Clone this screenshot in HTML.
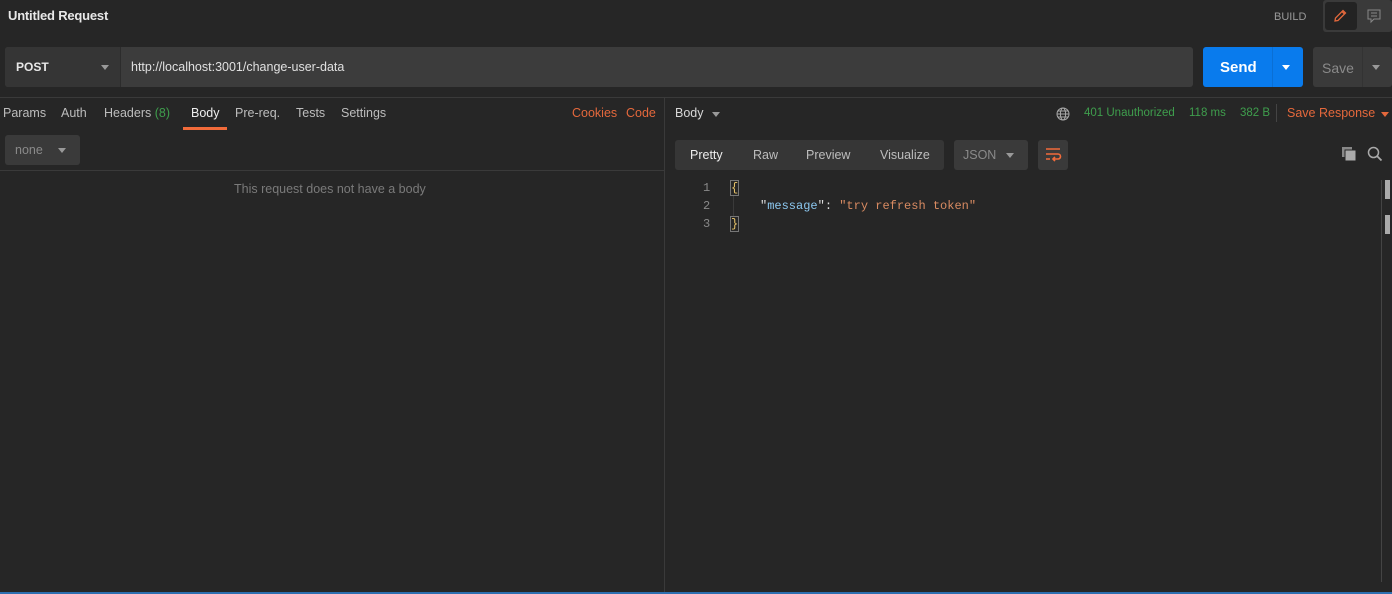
<!DOCTYPE html>
<html><head><style>
*{margin:0;padding:0;box-sizing:border-box}
body{width:1392px;height:594px;background:#262626;font-family:"Liberation Sans",sans-serif;font-size:12.5px;color:#d0d0d0;position:relative;overflow:hidden}
.a{position:absolute;white-space:nowrap}
.mono{font-family:"Liberation Mono",monospace;font-size:12px}
</style></head><body>
<div class="a" style="left:8px;top:8px;font-size:13px;color:#e8e8e8;font-weight:bold;letter-spacing:-0.2px">Untitled Request</div>
<div class="a" style="left:1274px;top:11px;font-size:11px;color:#9a9a9a">BUILD</div>
<div class="a" style="left:1323px;top:0;width:69px;height:32px;background:#3a3a3a;border-radius:3px"></div>
<div class="a" style="left:1325px;top:2px;width:32px;height:28px;background:#232323;border-radius:3px"></div>
<svg class="a" style="left:1332px;top:8px" width="16" height="16" viewBox="0 0 16 16"><path d="M3 13 L3.5 10 L11 2.5 L13.5 5 L6 12.5 Z M10 3.5 L12.5 6" fill="none" stroke="#e4683c" stroke-width="1.3"/></svg>
<svg class="a" style="left:1366px;top:8px" width="16" height="16" viewBox="0 0 16 16"><path d="M2 2 H14 V11 H8 L5 14 V11 H2 Z M5 5 H11 M5 8 H11" fill="none" stroke="#888" stroke-width="1"/></svg>

<div class="a" style="left:5px;top:47px;width:1188px;height:40px;background:#3c3c3c;border-radius:3px"></div>
<div class="a" style="left:5px;top:47px;width:116px;height:40px;background:#353535;border-radius:3px 0 0 3px;border-right:1px solid #2c2c2c"></div>
<div class="a" style="left:16px;top:60px;font-weight:bold;font-size:12px;color:#e8e8e8">POST</div>
<div class="a" style="left:101px;top:65px;border:4px solid transparent;border-top:5px solid #999"></div>
<div class="a" style="left:131px;top:60px;color:#e0e0e0">http://localhost:3001/change-user-data</div>

<div class="a" style="left:1203px;top:47px;width:100px;height:40px;background:#097bed;border-radius:3px"></div>
<div class="a" style="left:1272px;top:47px;width:1px;height:40px;background:#0a6fd4"></div>
<div class="a" style="left:1220px;top:59px;font-size:15px;font-weight:bold;color:#fff">Send</div>
<div class="a" style="left:1282px;top:65px;border:4px solid transparent;border-top:5px solid #fff"></div>
<div class="a" style="left:1313px;top:47px;width:79px;height:40px;background:#3a3a3a;border-radius:3px"></div>
<div class="a" style="left:1362px;top:47px;width:1px;height:40px;background:#333"></div>
<div class="a" style="left:1322px;top:60px;font-size:14px;color:#8a8a8a">Save</div>
<div class="a" style="left:1372px;top:65px;border:4px solid transparent;border-top:5px solid #999"></div>

<div class="a" style="left:0;top:97px;width:1392px;height:1px;background:#3a3a3a"></div>
<div class="a" style="left:664px;top:97px;width:1px;height:495px;background:#3a3a3a"></div>

<div class="a" style="left:3px;top:106px;color:#bdbdbd">Params</div>
<div class="a" style="left:61px;top:106px;color:#bdbdbd">Auth</div>
<div class="a" style="left:104px;top:106px;color:#bdbdbd">Headers <span style="color:#3f9e4d">(8)</span></div>
<div class="a" style="left:191px;top:106px;color:#eee">Body</div>
<div class="a" style="left:183px;top:127px;width:44px;height:3px;background:#f26b3a"></div>
<div class="a" style="left:235px;top:106px;color:#bdbdbd">Pre-req.</div>
<div class="a" style="left:296px;top:106px;color:#bdbdbd">Tests</div>
<div class="a" style="left:341px;top:106px;color:#bdbdbd">Settings</div>
<div class="a" style="left:572px;top:106px;color:#e4683c">Cookies</div>
<div class="a" style="left:626px;top:106px;color:#e4683c">Code</div>

<div class="a" style="left:5px;top:135px;width:75px;height:30px;background:#3a3a3a;border-radius:3px"></div>
<div class="a" style="left:15px;top:143px;color:#8a8a8a">none</div>
<div class="a" style="left:58px;top:148px;border:4px solid transparent;border-top:5px solid #999"></div>
<div class="a" style="left:0;top:170px;width:664px;height:1px;background:#3a3a3a"></div>
<div class="a" style="left:234px;top:182px;color:#7a7a7a">This request does not have a body</div>

<div class="a" style="left:675px;top:106px;color:#d8d8d8">Body</div>
<div class="a" style="left:712px;top:112px;border:4px solid transparent;border-top:5px solid #999"></div>
<svg class="a" style="left:1056px;top:107px" width="14" height="14" viewBox="0 0 14 14"><g fill="none" stroke="#aaa" stroke-width="1"><circle cx="7" cy="7" r="6"/><ellipse cx="7" cy="7" rx="2.6" ry="6"/><path d="M1 7H13M2 4H12M2 10H12"/></g></svg>
<div class="a" style="left:1084px;top:107px;font-size:11.5px;color:#3f9e4d">401 Unauthorized</div>
<div class="a" style="left:1189px;top:107px;font-size:11.5px;color:#3f9e4d">118 ms</div>
<div class="a" style="left:1240px;top:107px;font-size:11.5px;color:#3f9e4d">382 B</div>
<div class="a" style="left:1276px;top:104px;width:1px;height:18px;background:#444"></div>
<div class="a" style="left:1287px;top:106px;color:#e4683c">Save Response</div>
<div class="a" style="left:1381px;top:112px;border:4px solid transparent;border-top:5px solid #e4683c"></div>

<div class="a" style="left:675px;top:140px;width:269px;height:30px;background:#363636;border-radius:3px"></div>
<div class="a" style="left:690px;top:148px;color:#eee">Pretty</div>
<div class="a" style="left:753px;top:148px;color:#bdbdbd">Raw</div>
<div class="a" style="left:806px;top:148px;color:#bdbdbd">Preview</div>
<div class="a" style="left:880px;top:148px;color:#bdbdbd">Visualize</div>
<div class="a" style="left:954px;top:140px;width:74px;height:30px;background:#3a3a3a;border-radius:3px"></div>
<div class="a" style="left:963px;top:148px;color:#8a8a8a">JSON</div>
<div class="a" style="left:1006px;top:153px;border:4px solid transparent;border-top:5px solid #999"></div>
<div class="a" style="left:1038px;top:140px;width:30px;height:30px;background:#3a3a3a;border-radius:3px"></div>
<svg class="a" style="left:1044px;top:146px" width="18" height="18" viewBox="0 0 18 18"><g fill="none" stroke="#f26b3a" stroke-width="1.6"><path d="M2 3H16M2 8H14a2.5 2.5 0 0 1 0 5H9M2 13H6"/><path d="M11 11 L9 13 L11 15"/></g></svg>
<svg class="a" style="left:1341px;top:146px" width="16" height="16" viewBox="0 0 16 16"><rect x="1" y="1" width="10" height="10" fill="#888"/><rect x="4" y="4" width="11" height="11" fill="#aaa" stroke="#262626"/></svg>
<svg class="a" style="left:1367px;top:146px" width="16" height="16" viewBox="0 0 16 16"><circle cx="6.5" cy="6.5" r="5" fill="none" stroke="#aaa" stroke-width="1.5"/><path d="M10 10L14.5 14.5" stroke="#aaa" stroke-width="1.8"/></svg>

<div class="a mono" style="left:703px;top:181px;color:#8a8a8a">1</div>
<div class="a mono" style="left:703px;top:199px;color:#8a8a8a">2</div>
<div class="a mono" style="left:703px;top:217px;color:#8a8a8a">3</div>
<div class="a mono" style="left:731px;top:181px;color:#e8c46a;outline:1px solid #777">{</div>
<div class="a" style="left:733px;top:196px;width:1px;height:20px;background:#3a3a3a"></div>
<div class="a mono" style="left:760px;top:199px"><span style="color:#ddd">"</span><span style="color:#8cc8f0">message</span><span style="color:#ddd">": </span><span style="color:#d98b62">"try refresh token"</span></div>
<div class="a mono" style="left:731px;top:217px;color:#e8c46a;outline:1px solid #777">}</div>

<div class="a" style="left:1381px;top:180px;width:1px;height:402px;background:#444"></div>
<div class="a" style="left:1385px;top:180px;width:5px;height:19px;background:#aaa"></div>
<div class="a" style="left:1385px;top:215px;width:5px;height:19px;background:#aaa"></div>
<div class="a" style="left:0;top:592px;width:1392px;height:2px;background:#2d6fb0"></div>
</body></html>
